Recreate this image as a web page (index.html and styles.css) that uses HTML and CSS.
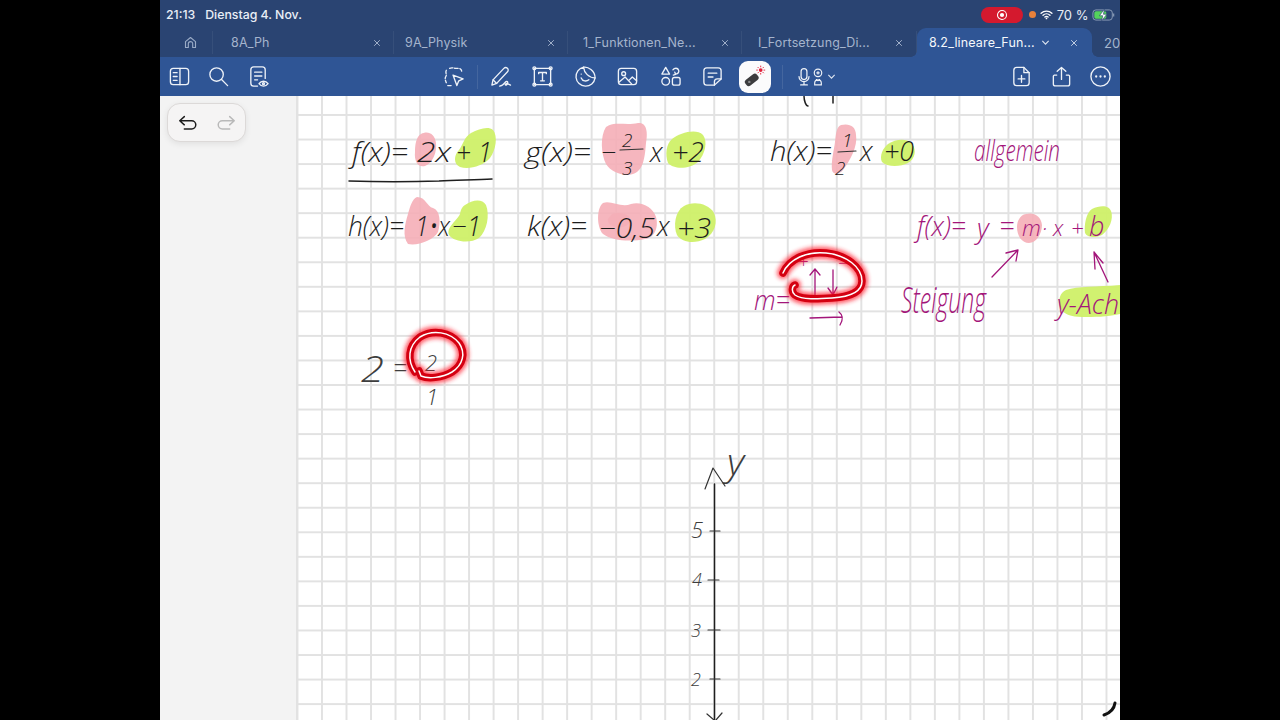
FILE: index.html
```html
<!DOCTYPE html>
<html lang="de">
<head>
<meta charset="utf-8">
<title>8.2_lineare_Funktionen</title>
<link rel="stylesheet" href="styles.css">
</head>
<body>
<div class="app">
  <header class="status">
    <span class="time">21:13</span>
    <span class="date">Dienstag 4. Nov.</span>
    <div class="status-right">
      <span class="rec"><svg viewBox="0 0 16 16" class="rec-icon"><circle cx="8" cy="8" r="6" class="rec-ring"/><circle cx="8" cy="8" r="2.8" class="rec-dot"/></svg></span>
      <span class="cam-dot"></span>
      <svg viewBox="0 0 18 14" class="wifi"><path d="M1.5 5.2a11 11 0 0 1 15 0M4.2 8a7 7 0 0 1 9.6 0M6.8 10.6a3.2 3.2 0 0 1 4.4 0"/><circle cx="9" cy="12.4" r="1.2"/></svg>
      <span class="pct">70 %</span>
      <svg viewBox="0 0 26 14" class="battery"><rect x="1" y="1.5" width="21" height="11" rx="3.2" class="bat-shell"/><rect x="2.5" y="3" width="13" height="8" rx="1.8" class="bat-fill"/><path d="M23.5 5.3v3.4" class="bat-cap"/><path d="M13.5 0.6 8 7.8h3.6l-1.2 5.6L16 6.2h-3.6z" class="bat-bolt"/></svg>
    </div>
  </header>

  <nav class="tabs">
    <div class="tab-home"><svg viewBox="0 0 24 24" class="icon-home"><path d="M4 20V10.5L12 4l8 6.5V20h-4.5v-6a3.5 3.5 0 0 0-7 0v6z"/></svg></div>
    <div class="tab tab-first"><span class="tab-name">8A_Ph</span><svg viewBox="0 0 10 10" class="x"><path d="M1.5 1.5l7 7M8.5 1.5l-7 7"/></svg></div>
    <div class="tab tab-second"><span class="tab-name">9A_Physik</span><svg viewBox="0 0 10 10" class="x"><path d="M1.5 1.5l7 7M8.5 1.5l-7 7"/></svg></div>
    <div class="tab tab-third"><span class="tab-name">1_Funktionen_Ne...</span><svg viewBox="0 0 10 10" class="x"><path d="M1.5 1.5l7 7M8.5 1.5l-7 7"/></svg></div>
    <div class="tab tab-fourth"><span class="tab-name">I_Fortsetzung_Di...</span><svg viewBox="0 0 10 10" class="x"><path d="M1.5 1.5l7 7M8.5 1.5l-7 7"/></svg></div>
    <div class="tab tab-active"><span class="tab-name">8.2_lineare_Fun...</span><svg viewBox="0 0 10 10" class="chev"><path d="M1.5 3.2 5 6.8l3.5-3.6"/></svg><svg viewBox="0 0 10 10" class="x"><path d="M1.5 1.5l7 7M8.5 1.5l-7 7"/></svg></div>
    <div class="tab tab-next"><span class="tab-name">20</span></div>
  </nav>

  <div class="toolbar">
    <div class="group-left">
      <div class="tool-l"><svg viewBox="0 0 24 24" class="ico"><rect x="2.5" y="3.5" width="19" height="17" rx="3"/><path d="M12.5 3.5v17M5.5 8h4M5.5 12h4M5.5 16h4"/></svg></div>
      <div class="tool-l"><svg viewBox="0 0 24 24" class="ico"><circle cx="10" cy="10" r="7"/><path d="M15.2 15.2 21.5 21.5"/></svg></div>
      <div class="tool-l"><svg viewBox="0 0 24 24" class="ico"><path d="M11 22H7a3 3 0 0 1-3-3V5a3 3 0 0 1 3-3h9a3 3 0 0 1 3 3v9M8 7.5h7.5M8 11.5h7.5M8 15.5h3"/><path d="M12.5 19.5c2.5-3.4 7-3.4 9.5 0-2.5 3.4-7 3.4-9.5 0z"/><circle cx="17.2" cy="19.5" r="1"/></svg></div>
    </div>
    <div class="group-center">
      <div class="tool"><svg viewBox="0 0 24 24" class="ico"><path d="M8 3.5c3-1.5 5 .5 8 0 3-.3 5 1 4.5 4.5M4.5 5.5C3 8 5.5 9.5 4 12c-1.5 2.5 0 5 .5 6.5M6 21.5h4" stroke-dasharray="3.5 1.8"/><path d="M11.5 10.5l10.5 4-4.5 2-2 5z"/></svg></div>
      <span class="divider divider-a"></span>
      <div class="tool"><svg viewBox="0 0 24 24" class="ico"><path d="M3 21l1.2-5.500L15.500 3.500a2.600 2.600 0 0 1 3.800 3.600L8 19.200z"/><path d="M4.200 15.500 8 19.200M11 22c2.500 0 4-1.500 6-4 1-1.300 2.600-1 2.600.5 0 2-2.600 3.400-2.600 1.800 1-1.200 3.500-.5 5.400.7"/></svg></div>
      <div class="tool"><svg viewBox="0 0 24 24" class="ico"><rect x="3.5" y="3.5" width="17" height="17"/><circle cx="3.5" cy="3.5" r="1.5"/><circle cx="20.5" cy="3.5" r="1.5"/><circle cx="3.5" cy="20.5" r="1.5"/><circle cx="20.5" cy="20.5" r="1.5"/><path d="M8 9V7.8h8V9M12 7.8v8.7M10 16.5h4"/></svg></div>
      <div class="tool"><svg viewBox="0 0 24 24" class="ico"><path d="M22 13.5A10 10 0 1 1 10 2.3c.5 6 5.5 10.900 12 11.200z"/><path d="M10 2.3c4.500-.8 12 3.500 12 11.200"/><path d="M7.5 13.5c1.500 3.600 5.500 4 8 1.800M7.5 9.5h.1"/></svg></div>
      <div class="tool"><svg viewBox="0 0 24 24" class="ico"><rect x="2.5" y="3.5" width="19" height="17" rx="3"/><circle cx="8" cy="9" r="2"/><path d="M3 18l6.5-5.500 7 7.500M14 15.500l3-3 4.500 4"/></svg></div>
      <div class="tool"><svg viewBox="0 0 24 24" class="ico"><path d="M7 2.5l4 7H3z"/><circle cx="7" cy="17" r="4"/><rect x="14" y="13" width="8" height="8" rx="2"/><path d="M14.5 5c1.500-2 5-2.500 6 .5.600 2-.5 3.500-3 4M16.500 7.500l.8 2.300-2.400.7"/></svg></div>
      <div class="tool"><svg viewBox="0 0 24 24" class="ico"><path d="M14 21H6a3 3 0 0 1-3-3V6a3 3 0 0 1 3-3h12a3 3 0 0 1 3 3v8.500z"/><path d="M14 21v-3.500a3 3 0 0 1 3-3h4M7.500 8.500h9M7.500 12.500h5"/></svg></div>
      <div class="tool tool-active"><svg viewBox="0 0 32 32" class="laser"><rect x="3" y="15" width="18" height="9" rx="3.5" transform="rotate(-38 12 19.5)" class="laser-body"/><circle cx="9" cy="22" r="1.5" class="laser-btn"/><circle cx="23" cy="7.5" r="2.3" class="laser-core"/><path d="M23 2v2M23 11v2M17.5 7.5h2M26.5 7.5h2M19.2 3.7l1.400 1.400M25.400 9.900l1.400 1.400M26.800 3.700l-1.400 1.400M20.600 9.900l-1.400 1.400" class="laser-rays"/></svg></div>
      <span class="divider divider-b"></span>
      <div class="audio">
        <svg viewBox="0 0 14 24" class="ico-mic"><rect x="3.5" y="2" width="7" height="13" rx="3.5"/><path d="M1 11.5a6 6 0 0 0 12 0M7 17.5v4M3 21.5h8"/></svg>
        <svg viewBox="0 0 12 24" class="ico-person"><circle cx="6" cy="7" r="4.5"/><path d="M6 5v4M4 7h4M2 21.5v-2a4 4 0 0 1 8 0v2zM4 14.5a2 2 0 1 0 4 0"/></svg>
        <svg viewBox="0 0 10 10" class="chev chev-audio"><path d="M1.5 3.2 5 6.8l3.5-3.6"/></svg>
      </div>
    </div>
    <div class="group-right">
      <div class="tool-l"><svg viewBox="0 0 24 24" class="ico"><path d="M14.5 2.5H7a3 3 0 0 0-3 3v13a3 3 0 0 0 3 3h10a3 3 0 0 0 3-3V8z"/><path d="M14.5 2.5V8H20M12 11v7M8.5 14.5h7"/></svg></div>
      <div class="tool-l"><svg viewBox="0 0 24 24" class="ico"><path d="M12 15V2.5M7.5 6.5 12 2.5l4.500 4M7 10.500H4.500a1.500 1.500 0 0 0-1 1.200v8a2 2 0 0 0 2 2h13a2 2 0 0 0 2-2v-8a1.500 1.500 0 0 0-1-1.200H17"/></svg></div>
      <div class="tool-l"><svg viewBox="0 0 24 24" class="ico"><circle cx="12" cy="12" r="10"/><circle cx="7.5" cy="12" r="1.2" class="solid"/><circle cx="12" cy="12" r="1.2" class="solid"/><circle cx="16.5" cy="12" r="1.2" class="solid"/></svg></div>
    </div>
  </div>

  <main class="workspace">
    <aside class="sidebar"></aside>
    <section class="page">
      <svg class="sheet" viewBox="297 96 823 624" width="823" height="624">
        <defs>
          <filter id="glow" x="-30%" y="-30%" width="160%" height="160%"><feGaussianBlur stdDeviation="2.2"/></filter>
        </defs>

        <!-- highlighter -->
        <path class="pink" d="M421 134c7-4 14 0 15 9 1 9-3 20-11 23-7 2-11-5-10-14 0-7 1-15 6-18z"/>
        <path class="green" d="M471 133c8-4 17-7 22-3 5 6 3 20-3 28-7 8-21 12-30 9-7-3-6-12-1-17 4-5 5-13 12-17z"/>
        <path class="pink" d="M606 127c9-6 20-1 32-4 9-1 10 10 8 20-1 12-2 28-13 31-10 3-22-2-27-10-5-10-6-28 0-37z"/>
        <path class="green" d="M672 139c8-6 24-11 31-4 5 7 2 19-5 27-8 7-24 8-30 1-3-8-2-19 4-24z"/>
        <path class="pink" d="M417 197c9 0 10 10 16 11 7 2 8 14 5 24-4 8-20 14-30 12-6-8-3-20 0-30 2-7 4-15 9-17z"/>
        <path class="green" d="M465 205c7-5 17-7 21 0 4 10 1 26-7 33-9 6-25 4-30-3-3-8 8-14 11-21 1-5 2-7 5-9z"/>
        <path class="pink" d="M603 203c8-3 18 5 28 1 10-3 22 3 25 13 3 11-2 21-11 22-14 3-33 2-42-5-7-8-6-27 0-31z"/>
        <path class="pink" d="M612 214c7-2 15-1 18 4 1 5-4 10-11 9-7 0-12-3-11-8z"/>
        <path class="green" d="M684 206c9-5 24-3 30 7 4 9 1 20-9 26-10 5-23 4-28-4-4-9-2-24 7-29z"/>
        <path class="pink" d="M841 125c8-2 15 1 15 10 2 11-6 26-13 35-4 5-10 5-11 0-1-9 2-20 3-28 1-7 1-15 6-17z"/>
        <path class="green" d="M888 144c8-5 19-6 24 0 5 6 3 15-4 19-8 4-21 4-26-1-3-6 1-14 6-18z"/>
        <path class="pink" d="M1026 214c8-2 15 2 16 11 0 9-6 18-13 18-7 0-12-7-12-16 0-6 3-12 9-13z"/>
        <path class="green" d="M1092 209c8-4 17-4 19 2 3 8-2 19-9 24-6 3-15 3-17-2-1-8 1-20 7-24z"/>
        <path class="green" d="M1066 290c12-4 30-3 54-5v29c-14 3-25 3-38 3-10 0-20-3-22-10-2-8 0-14 6-17z"/>

        <!-- black formulas -->
        <text class="ink ink-lg" x="352" y="162" textLength="56" lengthAdjust="spacingAndGlyphs">f(x)=</text>
        <text class="ink ink-lg" x="417" y="162" textLength="34" lengthAdjust="spacingAndGlyphs">2x</text>
        <text class="ink ink-lg" x="456" y="162" textLength="36" lengthAdjust="spacingAndGlyphs">+ 1</text>
        <text class="ink ink-lg" x="525" y="162" textLength="66" lengthAdjust="spacingAndGlyphs">g(x)=</text>
        <text class="ink ink-lg" x="601" y="162">−</text>
        <text class="ink ink-frac" x="622" y="147">2</text>
        <text class="ink ink-frac" x="622" y="175">3</text>
        <text class="ink ink-lg" x="650" y="162">x</text>
        <text class="ink ink-lg" x="672" y="162" textLength="32" lengthAdjust="spacingAndGlyphs">+2</text>
        <text class="ink ink-lg" x="770" y="161" textLength="62" lengthAdjust="spacingAndGlyphs">h(x)=</text>
        <text class="ink ink-frac" x="842" y="147">1</text>
        <text class="ink ink-frac" x="835" y="175">2</text>
        <text class="ink ink-lg" x="860" y="161">x</text>
        <text class="ink ink-lg" x="884" y="161" textLength="30" lengthAdjust="spacingAndGlyphs">+0</text>
        <text class="ink ink-lg" x="348" y="236" textLength="56" lengthAdjust="spacingAndGlyphs">h(x)=</text>
        <text class="ink ink-lg" x="415" y="236" textLength="35" lengthAdjust="spacingAndGlyphs">1•x</text>
        <text class="ink ink-lg" x="452" y="236" textLength="29" lengthAdjust="spacingAndGlyphs">−1</text>
        <text class="ink ink-lg" x="527" y="236" textLength="60" lengthAdjust="spacingAndGlyphs">k(x)=</text>
        <text class="ink ink-lg" x="599" y="238" textLength="56" lengthAdjust="spacingAndGlyphs">−0,5</text>
        <text class="ink ink-lg" x="657" y="236">x</text>
        <text class="ink ink-lg" x="677" y="238" textLength="34" lengthAdjust="spacingAndGlyphs">+3</text>
        <text class="ink ink-xl ink-faint" x="361" y="382" textLength="23" lengthAdjust="spacingAndGlyphs">2</text>
        <text class="ink ink-lg ink-faint" x="393" y="378" textLength="14" lengthAdjust="spacingAndGlyphs">=</text>
        <text class="ink ink-md ink-faint" x="425" y="371">2</text>
        <text class="ink ink-md ink-faint" x="426" y="405">1</text>
        <text class="ink ink-md ink-faint" x="691" y="538">5</text>
        <text class="ink ink-sm ink-faint" x="692" y="586">4</text>
        <text class="ink ink-sm ink-faint" x="691" y="637">3</text>
        <text class="ink ink-sm ink-faint" x="691" y="686">2</text>
        <text class="ink ink-xl ink-faint" x="727" y="475" textLength="17" lengthAdjust="spacingAndGlyphs">y</text>

        <!-- magenta formulas -->
        <text class="ink ink-tall ink-m" x="974" y="161" textLength="86" lengthAdjust="spacingAndGlyphs">allgemein</text>
        <text class="ink ink-lg ink-m" x="917" y="236" textLength="49" lengthAdjust="spacingAndGlyphs">f(x)=</text>
        <text class="ink ink-lg ink-m" x="977" y="238">y</text>
        <text class="ink ink-lg ink-m" x="999" y="236">=</text>
        <text class="ink ink-md ink-m" x="1022" y="236">m</text>
        <text class="ink ink-md ink-m" x="1042" y="236">·</text>
        <text class="ink ink-md ink-m" x="1053" y="236">x</text>
        <text class="ink ink-md ink-m" x="1071" y="236">+</text>
        <text class="ink ink-lg ink-m" x="1089" y="236">b</text>
        <text class="ink ink-xl ink-m" x="901" y="313" textLength="85" lengthAdjust="spacingAndGlyphs">Steigung</text>
        <text class="ink ink-lg ink-m" x="1057" y="314" textLength="62" lengthAdjust="spacingAndGlyphs">y-Ach</text>
        <text class="ink ink-lg ink-m" x="754" y="310" textLength="36" lengthAdjust="spacingAndGlyphs">m=</text>
        <text class="ink ink-sm ink-m" x="798" y="268">+</text>
        <text class="ink ink-sm ink-m" x="838" y="270">−</text>

        <!-- black strokes -->
        <path class="stroke" d="M349 181c30 1 60 1 90 0 18-1 36-1 53-2"/>
        <path class="stroke thin" d="M620 150l23-1M838 152l18-1"/>
        <path class="stroke" d="M714.5 484V720"/>
        <path class="stroke thin" d="M705 489l8-21 12 18M710 531h10M708 580h11M708 630h12M710 679h10M707 714l7 6M722 713l-6 7"/>
        <path class="stroke" d="M804 96c0 5 2 10 4 10M833 96v7"/>
        <path class="stroke heavy" d="M1115 703c-1 7-5 10-11 12"/>

        <!-- magenta strokes -->
        <path class="stroke-m" d="M992 277l26-27M1006 253l12-3-2 11"/>
        <path class="stroke-m" d="M1108 282l-14-30M1094 252l1 17M1094 252l9 11"/>
        <path class="stroke-m" d="M815 297V269M810 275l5-6 5 6M833 270v25M828 288l5 7 4-8"/>
        <path class="stroke-m" d="M810 318l32-1M839 312c4 3 4 8 1 13"/>

        <!-- laser marks -->
        <path class="glow" d="M783 273c6-14 24-22 43-20 20 2 36 14 36 28 0 12-14 16-30 17-14 1-30 2-37-3-4-3-3-9 0-10"/>
        <path class="red" d="M783 273c6-14 24-22 43-20 20 2 36 14 36 28 0 12-14 16-30 17-14 1-30 2-37-3-4-3-3-9 0-10"/>
        <path class="core" d="M783 273c6-14 24-22 43-20 20 2 36 14 36 28 0 12-14 16-30 17-14 1-30 2-37-3-4-3-3-9 0-10"/>
        <path class="glow" d="M415 372c-8-12-7-26 5-35 13-8 30-5 39 6 7 10 4 22-7 29-10 6-24 7-31 4l-2-5"/>
        <path class="red" d="M415 372c-8-12-7-26 5-35 13-8 30-5 39 6 7 10 4 22-7 29-10 6-24 7-31 4l-2-5"/>
        <path class="core" d="M415 372c-8-12-7-26 5-35 13-8 30-5 39 6 7 10 4 22-7 29-10 6-24 7-31 4l-2-5"/>
      </svg>
    </section>
    <div class="undo-pill">
      <svg viewBox="0 0 24 24" class="undo"><path d="M8 5 3 9.5 8 14M3 9.5h13a4.5 4.5 0 0 1 0 9H8"/></svg>
      <svg viewBox="0 0 24 24" class="redo"><path d="M16 5l5 4.5L16 14M21 9.5H8a4.5 4.5 0 0 0 0 9h8"/></svg>
    </div>
  </main>
</div>
</body>
</html>
```
FILE: styles.css
```css
* { box-sizing: border-box; }
html, body { margin: 0; height: 100%; background: #000; overflow: hidden; }
.app {
  width: 960px; height: 720px; margin: 0 auto;
  display: flex; flex-direction: column;
  font-family: Inter, "Noto Sans", sans-serif;
  overflow: hidden;
}

/* status bar */
.status {
  height: 28px; flex: none;
  display: flex; align-items: center;
  padding: 1px 4px 0 6px;
  background: #2a4472; color: #e9eef6;
  font-size: 12.3px; font-weight: 500;
}
.time { margin-right: 10px; }
.status-right { margin-left: auto; display: flex; align-items: center; }
.rec {
  width: 42px; height: 16px; border-radius: 8px; background: #d4192e;
  display: flex; align-items: center; justify-content: center;
}
.rec-icon { width: 12px; height: 12px; }
.rec-ring { fill: none; stroke: #fff; stroke-width: 1.4; }
.rec-dot { fill: #fff; }
.cam-dot { width: 7px; height: 7px; border-radius: 50%; background: #e8813a; margin-left: 6px; }
.wifi { width: 13px; height: 11px; margin-left: 4px; }
.wifi path { fill: none; stroke: #fff; stroke-width: 1.9; stroke-linecap: round; }
.wifi circle { fill: #fff; }
.pct { margin-left: 3.5px; font-size: 13px; font-weight: 400; }
.battery { width: 24px; height: 14px; margin-left: 3.5px; }
.bat-shell { fill: none; stroke: #8fa1bb; stroke-width: 1; }
.bat-fill { fill: #54d15c; }
.bat-cap { stroke: #8fa1bb; stroke-width: 1.2; fill: none; }
.bat-bolt { fill: #fff; stroke: #2a4472; stroke-width: .7; }

/* tabs */
.tabs {
  height: 29px; flex: none;
  display: flex; overflow: hidden;
  background: #2a4472;
}
.tab-home {
  width: 53px; flex: none; display: flex; align-items: center; justify-content: center;
  padding-left: 8px;
  position: relative;
}
.tab-home::after, .tab:not(.tab-active):not(.tab-next)::after {
  content: ""; position: absolute; right: 0; top: 3px; bottom: 3px; width: 1px;
  background: rgba(255,255,255,.06);
}
.icon-home { width: 15px; height: 15px; fill: none; stroke: #9aabc6; stroke-width: 1.8; stroke-linejoin: round; }
.tab {
  width: 174px; flex: none; position: relative;
  display: flex; align-items: center;
  padding: 0 13px 0 18px;
  color: #a5b4cd; font-size: 12.5px; letter-spacing: .15px;
}
.tab-first { width: 181px; }
.tab-second { padding-left: 11px; }
.tab-third { padding-left: 15px; }
.tab-fourth { width: 175px; padding-left: 16px; padding-right: 14px; }
.tab-name { flex: 1; white-space: nowrap; }
.x { width: 8px; height: 8px; flex: none; fill: none; stroke: #a5b4cd; stroke-width: 1.2; }
.tab-active {
  width: 175px; padding: 0 14px 0 12px;
  background: #2f5595; color: #f4f7fb; border-radius: 9px 9px 0 0;
}
.tab-active .x { stroke: #c8d3e6; }
.tab-active::before, .tab-active::after {
  content: ""; position: absolute; bottom: 0; width: 6px; height: 6px;
}
.tab-active::before { left: -6px; background: radial-gradient(circle at 0 0, transparent 5.5px, #2f5595 6px); }
.tab-active::after { right: -6px; background: radial-gradient(circle at 100% 0, transparent 5.5px, #2f5595 6px); }
.tab-active .tab-name { flex: none; width: 112px; }
.chev { width: 9px; height: 9px; flex: none; fill: none; stroke: #dfe6f1; stroke-width: 1.2; margin-right: 20px; }
.tab-next { padding-left: 12px; font-size: 13px; }

/* toolbar */
.toolbar {
  height: 39px; flex: none;
  display: flex; align-items: center;
  background: #2f5595;
}
.group-left, .group-center, .group-right { display: flex; align-items: center; }
.group-center { margin-left: 154px; }
.group-right { margin-left: auto; }
.tool-l { width: 39.3px; display: flex; justify-content: center; }
.tool { width: 42.5px; height: 34px; display: flex; align-items: center; justify-content: center; }
.ico { width: 23px; height: 23px; fill: none; stroke: #eef2f8; stroke-width: 1.4; stroke-linecap: round; stroke-linejoin: round; }
.ico .solid { fill: #eef2f8; stroke: none; }
.divider { width: 1px; height: 24px; background: rgba(255,255,255,.1); flex: none; }
.divider-a { margin: 0 .5px 0 3px; }
.divider-b { margin-left: 6px; }
.tool-active { width: 32px; height: 32px; margin: 0 5px; background: #fbfbfc; border-radius: 9px; }
.laser { width: 26px; height: 26px; }
.laser-body { fill: #3c3c3e; }
.laser-btn { fill: #8a8a8c; }
.laser-core { fill: #e0203a; }
.laser-rays { stroke: #e0203a; stroke-width: 1.1; fill: none; }
.audio { display: flex; align-items: center; margin-left: 15px; }
.ico-mic { width: 12px; height: 20px; fill: none; stroke: #eef2f8; stroke-width: 1.5; stroke-linecap: round; }
.ico-person { width: 10px; height: 20px; fill: none; stroke: #eef2f8; stroke-width: 1.4; margin-left: 3px; }
.chev-audio { margin: 0 0 0 4px; }

/* workspace */
.workspace { flex: 1; display: flex; min-height: 0; position: relative; }
.sidebar { width: 137px; flex: none; background: #f3f3f3; border-right: 1px solid #e2e2e2; }
.page {
  flex: 1; min-width: 0; overflow: hidden;
  background-color: #fff;
  background-image:
    linear-gradient(90deg, #e2e2e2 1.5px, transparent 1.5px),
    linear-gradient(180deg, #e2e2e2 1.5px, transparent 1.5px);
  background-size: 24.53px 24.55px;
  background-position: 24px 18px;
}
.sheet { display: block; }

.pink { fill: #f5aeb7; opacity: .9; }
.green { fill: #cff068; opacity: .95; }
.ink {
  font-family: "Open Sans", "Noto Sans", sans-serif;
  font-weight: 300; font-style: italic;
  fill: #1d1d1d;
}
.ink-xl { font-size: 37px; }
.ink-tall { font-size: 30px; }
.ink-lg { font-size: 27px; }
.ink-md { font-size: 22px; }
.ink-frac { font-size: 19px; }
.ink-sm { font-size: 18px; }
.ink-faint { fill: #3d3d3d; }
.ink-m { fill: #a3157a; }
.stroke { fill: none; stroke: #1f1f1f; stroke-width: 1.5; stroke-linecap: round; stroke-linejoin: round; }
.stroke.thin { stroke-width: 1.2; stroke: #333; }
.stroke.heavy { stroke-width: 3; stroke: #111; }
.stroke-m { fill: none; stroke: #a3157a; stroke-width: 1.3; stroke-linecap: round; stroke-linejoin: round; }
.glow { fill: none; stroke: #ff2030; stroke-width: 12; stroke-linecap: round; filter: url(#glow); opacity: .75; }
.red { fill: none; stroke: #d40011; stroke-width: 7.5; stroke-linecap: round; }
.core { fill: none; stroke: #fff; stroke-width: 1.5; stroke-linecap: round; }

/* undo */
.undo-pill {
  position: absolute; left: 7px; top: 7px;
  width: 79px; height: 39px;
  display: flex; align-items: center; justify-content: center; gap: 16px;
  background: #f5f4f4;
  border: 1px solid #dcd9d8; border-radius: 13px;
  box-shadow: 0 2px 6px rgba(0,0,0,.08);
}
.undo, .redo { width: 22px; height: 22px; fill: none; stroke-width: 1.6; stroke-linecap: round; stroke-linejoin: round; }
.undo { stroke: #1c1c1c; }
.redo { stroke: #b9b9b9; }
```
